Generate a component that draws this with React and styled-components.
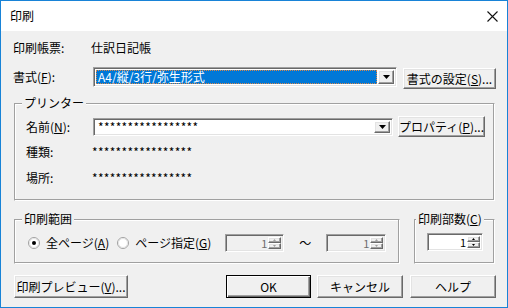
import React from 'react';
import styled, { createGlobalStyle, css } from 'styled-components';

const Global = createGlobalStyle`
  html, body { margin: 0; padding: 0; background: #fff; }
  body {
    font-family: "Noto Sans CJK JP", "Noto Sans", sans-serif;
    font-size: 12px;
    color: #000;
  }
`;

const raised = css`
  border: 1px solid;
  border-color: #ffffff #696969 #696969 #ffffff;
  box-shadow: inset -1px -1px 0 #a0a0a0, inset 1px 1px 0 #e3e3e3;
  background: #f0f0f0;
`;

const sunken = css`
  border: 1px solid;
  border-color: #a0a0a0 #ffffff #ffffff #a0a0a0;
  box-shadow: inset 1px 1px 0 #696969, inset -1px -1px 0 #e3e3e3;
`;

const Window = styled.div`
  width: 508px;
  height: 308px;
  box-sizing: border-box;
  border: 1px solid #1883d7;
  display: flex;
  flex-direction: column;
  background: #f0f0f0;
  overflow: hidden;
`;

const TitleBar = styled.div`
  height: 30px;
  flex-shrink: 0;
  background: #fff;
  display: flex;
  align-items: center;
  justify-content: space-between;
  padding: 0 9px 0 9px;
  line-height: 1;
`;

const Title = styled.span`
  font-size: 12px;
  margin-top: -1px;
`;

const Body = styled.div`
  flex: 1;
  display: flex;
  flex-direction: column;
  padding: 0 13px 0 12px;
`;

const Row = styled.div`
  display: flex;
  align-items: ${p => p.$align || 'center'};
  height: ${p => p.$h || 20}px;
  margin-top: ${p => p.$mt || 0}px;
  flex-shrink: 0;
`;

const Label = styled.span`
  width: ${p => p.$w}px;
  flex-shrink: 0;
  white-space: nowrap;
  line-height: 1;
  margin-top: ${p => p.$mt || 0}px;
`;

const Value = styled.span`
  white-space: nowrap;
  line-height: 1;
  letter-spacing: ${p => p.$ls || 0}px;
`;

const Combo = styled.div`
  ${sunken};
  box-sizing: border-box;
  width: ${p => p.$w}px;
  height: ${p => p.$h}px;
  background: #fff;
  display: flex;
  align-items: stretch;
  padding: 2px;
  flex-shrink: 0;
`;

const ComboText = styled.div`
  flex: 1;
  display: flex;
  align-items: center;
  padding-left: 2px;
  white-space: nowrap;
  line-height: 1;
  ${p => p.$selected && css`
    background: #0078d7;
    color: #fff;
    outline: 1px dotted #d9884a;
    outline-offset: -1px;
  `}
`;

const DropBtn = styled.div`
  ${raised};
  box-sizing: border-box;
  width: 16px;
  margin-left: 1px;
  display: flex;
  align-items: center;
  justify-content: center;
`;

const Button = styled.div`
  ${raised};
  box-sizing: border-box;
  width: ${p => p.$w}px;
  height: ${p => p.$h || 21}px;
  margin-left: ${p => p.$ml || 0}px;
  margin-top: ${p => p.$mt || 0}px;
  display: flex;
  align-items: center;
  justify-content: center;
  white-space: nowrap;
  flex-shrink: 0;
  line-height: 1;
  ${p => p.$default && css`
    border-color: #000;
    box-shadow: inset 1px 1px 0 #fff, inset -1px -1px 0 #696969, inset -2px -2px 0 #a0a0a0;
  `}
`;

const Group = styled.div`
  position: relative;
  box-sizing: border-box;
  width: ${p => p.$w}px;
  height: ${p => p.$h}px;
  margin-top: ${p => p.$mt || 0}px;
  margin-left: ${p => p.$ml || 0}px;
  border: 1px solid;
  border-color: #a0a0a0 #ffffff #ffffff #a0a0a0;
  box-shadow: inset -1px -1px 0 #a0a0a0, inset 1px 1px 0 #ffffff;
  padding: ${p => p.$pad};
  display: flex;
  flex-direction: column;
  flex-shrink: 0;
`;

const Legend = styled.span`
  position: absolute;
  top: -8px;
  left: ${p => p.$left || 7}px;
  padding: 0 2px;
  background: #f0f0f0;
  line-height: 14px;
  white-space: nowrap;
`;

const GroupRow = styled.div`
  display: flex;
  align-items: center;
  margin-top: ${p => p.$mt || 0}px;
`;

const Radio = styled.label`
  display: flex;
  align-items: center;
  gap: 6px;
  margin-right: ${p => p.$mr || 0}px;
  white-space: nowrap;
  line-height: 1;
  flex-shrink: 0;
`;

const SpinBox = styled.div`
  ${sunken};
  box-sizing: border-box;
  width: ${p => p.$w}px;
  height: 18px;
  background: ${p => (p.$disabled ? '#f0f0f0' : '#fff')};
  display: flex;
  align-items: stretch;
  padding: 2px;
  flex-shrink: 0;
`;

const SpinValue = styled.div`
  flex: 1;
  text-align: right;
  padding-right: 1px;
  font-size: 11px;
  line-height: 13px;
  color: ${p => (p.$disabled ? '#6d6d6d' : '#000')};
`;

const SpinButtons = styled.div`
  width: 13px;
  display: flex;
  flex-direction: column;
`;

const SpinBtn = styled.div`
  ${raised};
  box-sizing: border-box;
  flex: 1;
  display: flex;
  align-items: center;
  justify-content: center;
`;

const Tilde = styled.span`
  width: 42px;
  text-align: center;
  flex-shrink: 0;
  font-size: 12px;
  line-height: 1;
`;

const Buttons = styled.div`
  display: flex;
  margin-top: 11px;
  margin-left: 1px;
`;

const Underline = styled.span`
  text-decoration: underline;
  text-underline-offset: 1px;
`;

const Arrow = ({ up, color = '#000', w = 7 }) => {
  const h = Math.ceil(w / 2);
  return (
    <svg width={w} height={h} viewBox={`0 0 ${w} ${h}`}>
      <polygon
        points={up ? `0,${h} ${w},${h} ${w / 2},0` : `0,0 ${w},0 ${w / 2},${h}`}
        fill={color}
      />
    </svg>
  );
};

const RadioIcon = ({ checked }) => (
  <svg width="12" height="12" viewBox="0 0 12 12">
    <circle cx="6" cy="6" r="5.5" fill="#fff" stroke="#a0a0a0" />
    <circle cx="6" cy="6" r="4.5" fill="none" stroke="#e3e3e3" />
    {checked && <circle cx="6" cy="6" r="2" fill="#000" />}
  </svg>
);

const CloseIcon = () => (
  <svg width="11" height="11" viewBox="0 0 11 11">
    <path d="M0.5 0.5 L10.5 10.5 M10.5 0.5 L0.5 10.5" stroke="#111" strokeWidth="1.1" />
  </svg>
);

const Spinner = ({ w, disabled, value }) => (
  <SpinBox $w={w} $disabled={disabled}>
    <SpinValue $disabled={disabled}>{value}</SpinValue>
    <SpinButtons>
      <SpinBtn><Arrow up w={3} color={disabled ? '#a0a0a0' : '#000'} /></SpinBtn>
      <SpinBtn><Arrow w={3} color={disabled ? '#a0a0a0' : '#000'} /></SpinBtn>
    </SpinButtons>
  </SpinBox>
);

const stars = '*****************';

export default function App() {
  return (
    <>
      <Global />
      <Window>
        <TitleBar>
          <Title>印刷</Title>
          <CloseIcon />
        </TitleBar>
        <Body>
          <Row $mt={7}>
            <Label $w={78}>印刷帳票:</Label>
            <Value>仕訳日記帳</Value>
          </Row>
          <Row $mt={9} $h={22} $align="flex-start">
            <Label $w={80} $mt={4}>書式(<Underline>F</Underline>):</Label>
            <Combo $w={304} $h={20}>
              <ComboText $selected>A4/縦/3行/弥生形式</ComboText>
              <DropBtn><Arrow /></DropBtn>
            </Combo>
            <Button $w={93} $ml={6} $mt={1}>書式の設定(<Underline>S</Underline>)...</Button>
          </Row>

          <Group $w={481} $h={98} $mt={14} $ml={1} $pad="12px 0 0 11px">
            <Legend>プリンター</Legend>
            <GroupRow>
              <Label $w={67}>名前(<Underline>N</Underline>):</Label>
              <Combo $w={300} $h={18}>
                <ComboText><Value $ls={0.3}>{stars}</Value></ComboText>
                <DropBtn><Arrow /></DropBtn>
              </Combo>
              <Button $w={87} $ml={5}>プロパティ(<Underline>P</Underline>)...</Button>
            </GroupRow>
            <GroupRow $mt={9}>
              <Label $w={66}>種類:</Label>
              <Value $ls={0.3}>{stars}</Value>
            </GroupRow>
            <GroupRow $mt={14}>
              <Label $w={66}>場所:</Label>
              <Value $ls={0.3}>{stars}</Value>
            </GroupRow>
          </Group>

          <Row $mt={18} $h={45} $align="flex-start">
            <Group $w={386} $h={45} $ml={1} $pad="14px 0 0 13px">
              <Legend>印刷範囲</Legend>
              <GroupRow>
                <Radio $mr={8}>
                  <RadioIcon checked />
                  <span>全ページ(<Underline>A</Underline>)</span>
                </Radio>
                <Radio $mr={14}>
                  <RadioIcon />
                  <span>ページ指定(<Underline>G</Underline>)</span>
                </Radio>
                <Spinner w={59} disabled value="1" />
                <Tilde>～</Tilde>
                <Spinner w={60} disabled value="1" />
              </GroupRow>
            </Group>
            <Group $w={81} $h={45} $ml={14} $pad="13px 0 0 12px">
              <Legend $left={1}>印刷部数(<Underline>C</Underline>)</Legend>
              <GroupRow>
                <Spinner w={56} value="1" />
              </GroupRow>
            </Group>
          </Row>

          <Buttons>
            <Button $w={114} $h={23}>印刷プレビュー(<Underline>V</Underline>)...</Button>
            <Button $w={85} $h={23} $ml={98} $default>OK</Button>
            <Button $w={86} $h={23} $ml={6}>キャンセル</Button>
            <Button $w={86} $h={23} $ml={7}>ヘルプ</Button>
          </Buttons>
        </Body>
      </Window>
    </>
  );
}
